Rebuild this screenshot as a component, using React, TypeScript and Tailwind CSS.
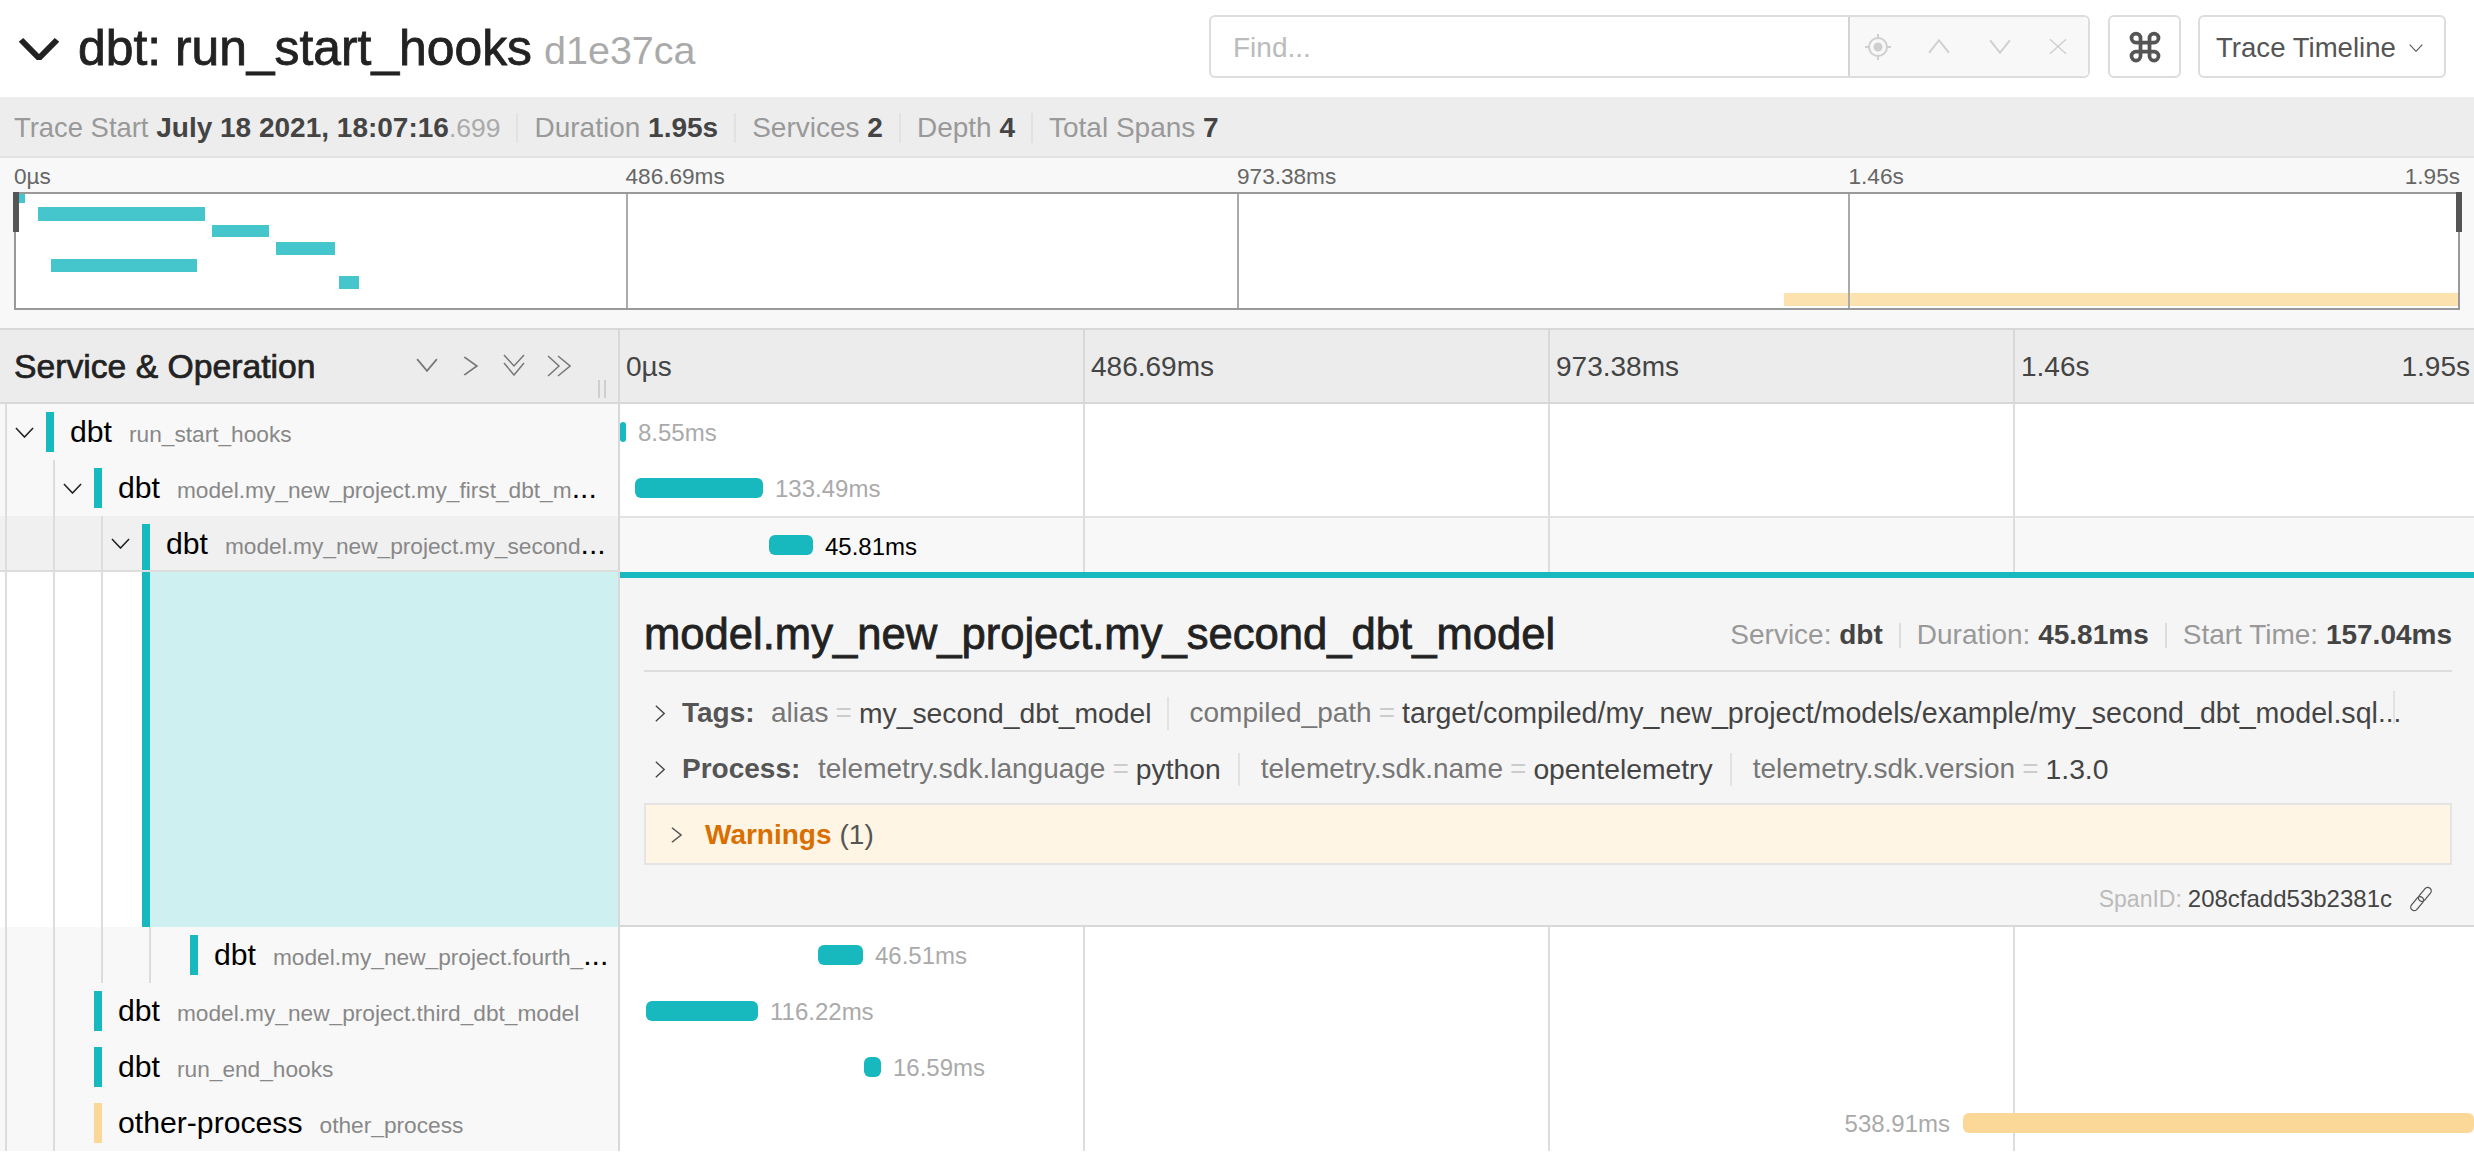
import { Command } from "lucide-react";

const TEAL = "#17b8be";
const ORANGE = "#fbd898";

type Span = {
  service: string;
  op: string;
  cut?: boolean;
  depth: number;
  open?: boolean;
  left: number;
  width: number;
  label: string;
  color: string;
  selected?: boolean;
  labelLeft?: boolean;
};

const topSpans: Span[] = [
  { service: "dbt", op: "run_start_hooks", depth: 0, open: true, left: 0, width: 6, label: "8.55ms", color: TEAL },
  { service: "dbt", op: "model.my_new_project.my_first_dbt_m", cut: true, depth: 1, open: true, left: 15, width: 128, label: "133.49ms", color: TEAL },
  { service: "dbt", op: "model.my_new_project.my_second", cut: true, depth: 2, open: true, left: 149, width: 44, label: "45.81ms", color: TEAL, selected: true },
];

const bottomSpans: Span[] = [
  { service: "dbt", op: "model.my_new_project.fourth_", cut: true, depth: 3, left: 198, width: 45, label: "46.51ms", color: TEAL },
  { service: "dbt", op: "model.my_new_project.third_dbt_model", depth: 1, left: 26, width: 112, label: "116.22ms", color: TEAL },
  { service: "dbt", op: "run_end_hooks", depth: 1, left: 244, width: 17, label: "16.59ms", color: TEAL },
  { service: "other-process", op: "other_process", depth: 1, left: 1343, width: 511, label: "538.91ms", color: ORANGE, labelLeft: true },
];

function Chevron({ dir, className }: { dir: "up" | "down" | "left" | "right"; className: string }) {
  const pts = {
    down: "1,1 10,11 19,1",
    up: "1,11 10,1 19,11",
    right: "1,1 11,10 1,19",
    left: "11,1 1,10 11,19",
  }[dir];
  const box = dir === "down" || dir === "up" ? "0 0 20 12" : "0 0 12 20";
  return (
    <svg viewBox={box} preserveAspectRatio="none" className={className} fill="none" stroke="currentColor" strokeWidth="1.6">
      <polyline points={pts} />
    </svg>
  );
}

function Guides({ depth, chevron }: { depth: number; chevron?: boolean }) {
  const guides = [];
  for (let i = 0; i < depth; i++) {
    guides.push(<div key={i} className="w-[48px] shrink-0 border-l-2 border-[#dddddd]" />);
  }
  return (
    <>
      {guides}
      <div className="w-[41px] shrink-0 self-stretch border-l-2 border-[#dddddd] flex items-center pl-[8px] text-[#222222]">
        {chevron && <Chevron dir="down" className="w-[19px] h-[11px]" />}
      </div>
    </>
  );
}

function GridLines() {
  return (
    <div className="absolute inset-0 flex">
      <div className="w-[465px] border-r-2 border-[#dddddd]" />
      <div className="w-[465px] border-r-2 border-[#dddddd]" />
      <div className="w-[465px] border-r-2 border-[#dddddd]" />
    </div>
  );
}

function SpanRow({ span }: { span: Span }) {
  return (
    <div className={`flex h-[56px] ${span.selected ? "bg-[#f0f0f0]" : ""}`}>
      <div className={`w-[620px] shrink-0 flex pl-[5px] border-r-2 border-[#d8d8d8] ${span.selected ? "bg-[#f0f0f0] border-b-2 border-b-[#dcdcdc]" : "bg-[#f8f8f8]"}`}>
        <Guides depth={span.depth} chevron={span.open} />
        <div
          className={`w-[8px] shrink-0 ${span.selected ? "mt-[8px]" : "my-[8px]"}`}
          style={{ backgroundColor: span.color }}
        />
        <div className="ml-[16px] whitespace-nowrap leading-[56px] text-[22.7px] text-black">
          <span className="text-[30.2px]">{span.service}</span>
          <span className="ml-[17px] text-[#888888]">{span.op}</span>
          {span.cut && <span className="text-[30.2px]">...</span>}
        </div>
      </div>
      <div className={`relative flex-1 ${span.selected ? "bg-[#f8f8f8] border-t-2 border-[#e2e2e2]" : "bg-white"}`}>
        <GridLines />
        <div
          className="absolute top-1/2 -translate-y-1/2 h-[20px] rounded-[6px]"
          style={{ left: span.left, width: span.width, backgroundColor: span.color }}
        />
        <div
          className={`absolute top-[14px] leading-[30px] text-[24px] whitespace-nowrap ${span.selected ? "text-black" : "text-[#aaaaaa]"}`}
          style={span.labelLeft ? { right: 2474 - 620 - span.left + 13 } : { left: span.left + span.width + 12 }}
        >
          {span.label}
        </div>
      </div>
    </div>
  );
}

function KV({ k, v, last, tail, tight, vClass }: { k: string; v: string; last?: boolean; tail?: boolean; tight?: boolean; vClass?: string }) {
  return (
    <div className={`flex items-center h-[33px] ${last ? "" : `border-r-2 border-[#e2e2e2] mr-[21px] ${tight ? "pr-[15px]" : "pr-[17px]"}`}`}>
      <span className="text-[#777777]">{k}</span>
      <span className="text-[#cccccc] mx-[7px]">=</span>
      <span className={`text-[#444444] ${vClass ?? "text-[28.3px]"}`}>{v}</span>
      {tail && (
        <span className="relative text-[#444444]">
          ...
          <span className="absolute left-[15px] -top-[1px] h-[33px] border-l-2 border-[#e2e2e2]" />
        </span>
      )}
    </div>
  );
}

function Minimap() {
  const bars = [
    [5, 0, 6, 11, "#45c6cc"],
    [24, 15, 167, 14, "#45c6cc"],
    [198, 33, 57, 12, "#45c6cc"],
    [262, 50, 59, 13, "#45c6cc"],
    [37, 67, 146, 13, "#45c6cc"],
    [325, 84, 20, 13, "#45c6cc"],
    [1770, 101, 675, 13, "#fbe2ae"],
  ] as const;
  return (
    <div className="h-[170px] bg-[#f8f8f8] px-[14px]">
      <div className="grid grid-cols-4 h-[34px] items-end text-[22.6px] leading-[30px] text-[#666666]">
        <span>0µs</span>
        <span>486.69ms</span>
        <span>973.38ms</span>
        <span className="flex justify-between">
          <span>1.46s</span>
          <span>1.95s</span>
        </span>
      </div>
      <svg width="2446" height="118" className="block overflow-visible">
        <rect width="2446" height="118" fill="white" />
        {bars.map((b, i) => (
          <rect key={i} x={b[0]} y={b[1]} width={b[2]} height={b[3]} fill={b[4]} />
        ))}
        <rect x="612" y="0" width="2" height="118" fill="#aaaaaa" />
        <rect x="1223" y="0" width="2" height="118" fill="#aaaaaa" />
        <rect x="1834" y="0" width="2" height="118" fill="#aaaaaa" />
        <rect x="1" y="1" width="2444" height="116" fill="none" stroke="#999999" strokeWidth="2" />
        <rect x="-1" y="0" width="6" height="40" fill="#555555" />
        <rect x="2442" y="0" width="6" height="40" fill="#555555" />
      </svg>
    </div>
  );
}

export default function App() {
  return (
    <div className="w-[2474px] h-[1152px] overflow-hidden bg-white font-['Liberation_Sans',Arial,sans-serif]">
      {/* Шапка */}
      <div className="h-[97px] flex items-center pl-[19px] pr-[28px]">
        <Chevron dir="down" className="w-[40px] h-[22px] text-[#222222] [&>polyline]:[stroke-width:3]" />
        <h1 className="ml-[19px] text-[49.8px] leading-none text-[#222222] [-webkit-text-stroke:0.8px_#222222]">dbt: run_start_hooks</h1>
        <span className="ml-[12px] text-[39.5px] leading-none text-[#aaaaaa] mt-[4px]">d1e37ca</span>
        <div className="ml-auto flex items-center mb-[4px]">
          <div className="flex h-[63px] w-[881px] rounded-[6px] border-2 border-[#dddddd]">
            <div className="w-[639px] flex items-center pl-[22px] pt-[2px] text-[28px] text-[#bbbbbb] border-r-2 border-[#d4d4d4]">Find...</div>
            <div className="flex-1 flex items-center bg-[#f8f8f8] text-[#cfcfcf] rounded-r-[6px]">
              <svg viewBox="0 0 26 26" className="ml-[15px] w-[26px] h-[26px]" fill="none" stroke="currentColor" strokeWidth="2">
                <circle cx="13" cy="13" r="9" />
                <circle cx="13" cy="13" r="4.5" fill="currentColor" stroke="none" />
                <path d="M13 0v4M13 22v4M0 13h4M22 13h4" />
              </svg>
              <Chevron dir="up" className="ml-[37px] w-[22px] h-[15px]" />
              <Chevron dir="down" className="ml-[39px] w-[22px] h-[15px]" />
              <svg viewBox="0 0 20 18" className="ml-[38px] w-[18px] h-[17px]" fill="none" stroke="currentColor" strokeWidth="1.6">
                <path d="M1 1L19 17M19 1L1 17" />
              </svg>
            </div>
          </div>
          <div className="ml-[18px] w-[73px] h-[63px] rounded-[6px] border-2 border-[#dddddd] flex items-center justify-center text-[#555555]">
            <Command size={36} strokeWidth={2.5} />
          </div>
          <div className="ml-[17px] w-[248px] h-[63px] rounded-[6px] border-2 border-[#dddddd] flex items-center pl-[16px] pt-[2px] text-[27.6px] text-[#555555]">
            Trace Timeline
            <Chevron dir="down" className="ml-[13px] w-[14px] h-[8px]" />
          </div>
        </div>
      </div>

      {/* Статистика */}
      <div className="h-[61px] bg-[#ededed] border-b-2 border-[#e2e2e2] flex items-center pl-[14px] pt-[2px] text-[28px] text-[#999999]">
        <span>
          <span className="text-[27.4px]">Trace Start</span> <b className="text-[#444444]">July 18 2021, 18:07:16</b>
          <span className="text-[#aaaaaa] text-[26.5px]">.699</span>
        </span>
        <span className="h-[30px] border-l-2 border-[#e2e2e2] mx-[16px]" />
        <span>Duration <b className="text-[#444444]">1.95s</b></span>
        <span className="h-[30px] border-l-2 border-[#e2e2e2] mx-[16px]" />
        <span>Services <b className="text-[#444444]">2</b></span>
        <span className="h-[30px] border-l-2 border-[#e2e2e2] mx-[16px]" />
        <span>Depth <b className="text-[#444444]">4</b></span>
        <span className="h-[30px] border-l-2 border-[#e2e2e2] mx-[16px]" />
        <span>Total Spans <b className="text-[#444444]">7</b></span>
      </div>

      <Minimap />

      {/* Заголовок таймлайна */}
      <div className="flex h-[76px] bg-[#ececec] border-y-2 border-[#d8d8d8]">
        <div className="relative w-[620px] shrink-0 flex items-center pl-[14px] border-r-2 border-[#d8d8d8]">
          <span className="text-[33.7px] text-[#222222] [-webkit-text-stroke:0.7px_#222222] flex-1">Service &amp; Operation</span>
          <div className="absolute left-[416px] top-[28px] text-[#777777]">
            <Chevron dir="down" className="w-[22px] h-[14px]" />
          </div>
          <div className="absolute left-[463px] top-[26px] text-[#777777]">
            <Chevron dir="right" className="w-[15px] h-[20px]" />
          </div>
          <div className="absolute left-[503px] top-[24px] text-[#777777]">
            <svg viewBox="0 0 22 22" className="w-[22px] h-[22px]" fill="none" stroke="currentColor" strokeWidth="1.5">
              <path d="M1 1L11 12L21 1M1 9L11 21L21 9" />
            </svg>
          </div>
          <div className="absolute left-[547px] top-[25px] text-[#777777]">
            <svg viewBox="0 0 24 22" className="w-[24px] h-[22px]" fill="none" stroke="currentColor" strokeWidth="1.5">
              <path d="M1 1L12 11L1 21M11 1L23 11L11 21" />
            </svg>
          </div>
          <div className="absolute left-[598px] top-[50px] w-[8px] h-[18px] border-x-2 border-[#cfcfcf]" />
        </div>
        <div className="flex-1 flex items-center text-[28px] text-[#444444]">
          <div className="w-[465px] pl-[6px] pt-[2px] border-r-2 border-[#d8d8d8] self-stretch flex items-center">0µs</div>
          <div className="w-[465px] pl-[6px] pt-[2px] border-r-2 border-[#d8d8d8] self-stretch flex items-center">486.69ms</div>
          <div className="w-[465px] pl-[6px] pt-[2px] border-r-2 border-[#d8d8d8] self-stretch flex items-center">973.38ms</div>
          <div className="flex-1 pl-[6px] pr-[4px] pt-[2px] flex justify-between">
            <span>1.46s</span>
            <span>1.95s</span>
          </div>
        </div>
      </div>

      {topSpans.map((s) => (
        <SpanRow key={s.op} span={s} />
      ))}

      {/* Детали спана */}
      <div className="flex h-[355px]">
        <div className="w-[620px] shrink-0 flex pl-[5px] bg-white">
          <Guides depth={2} />
          <div className="w-[8px] bg-[#17b8be]" />
          <div className="flex-1 bg-[#cff0f1] border-r-2 border-[#d8d8d8]" />
        </div>
        <div className="flex-1 min-w-0 bg-[#f5f5f5] border-t-[6px] border-t-[#17b8be] border-b-2 border-b-[#d8d8d8] pl-[24px] pr-[22px]">
          <div className="flex items-center h-[94px] pt-[22px] border-b-2 border-[#dddddd]">
            <h2 className="text-[43.6px] leading-none text-[#222222] [-webkit-text-stroke:0.8px_#222222] whitespace-nowrap">model.my_new_project.my_second_dbt_model</h2>
            <div className="ml-auto flex items-center text-[28px] text-[#999999] whitespace-nowrap">
              <span>Service: <b className="text-[#444444]">dbt</b></span>
              <span className="h-[25px] border-l-2 border-[#dddddd] mx-[16px]" />
              <span>Duration: <b className="text-[#444444]">45.81ms</b></span>
              <span className="h-[25px] border-l-2 border-[#dddddd] mx-[16px]" />
              <span>Start Time: <b className="text-[#444444]">157.04ms</b></span>
            </div>
          </div>
          <div className="flex items-center h-[56px] mt-[13px] text-[28px] whitespace-nowrap overflow-hidden">
            <Chevron dir="right" className="ml-[11px] w-[10px] h-[17px] text-[#444444]" />
            <b className="ml-[17px] text-[#555555] w-[89px]">Tags:</b>
            <KV k="alias" v="my_second_dbt_model" tight />
            <KV k="compiled_path" v="target/compiled/my_new_project/models/example/my_second_dbt_model.sql" vClass="text-[28.6px]" last tail />
          </div>
          <div className="flex items-center h-[56px] text-[28px] whitespace-nowrap overflow-hidden">
            <Chevron dir="right" className="ml-[11px] w-[10px] h-[17px] text-[#444444]" />
            <b className="ml-[17px] text-[#555555] w-[136px]">Process:</b>
            <KV k="telemetry.sdk.language" v="python" />
            <KV k="telemetry.sdk.name" v="opentelemetry" />
            <KV k="telemetry.sdk.version" v="1.3.0" last />
          </div>
          <div className="mt-[6px] h-[62px] bg-[#fff5e4] border-2 border-[#e4e4e4] flex items-center pl-[25px] pt-[2px] text-[28px] text-[#555555]">
            <Chevron dir="right" className="w-[11px] h-[16px]" />
            <b className="ml-[23px] text-[#d96f00]">Warnings</b>
            <span className="ml-[8px]">(1)</span>
          </div>
          <div className="flex items-center justify-end h-[60px] pt-[8px] pr-[18px] text-[24px]">
            <span className="text-[#bbbbbb] text-[23px]">SpanID:</span>
            <span className="ml-[6px] text-[#444444]">208cfadd53b2381c</span>
            <svg viewBox="0 0 26 26" className="ml-[16px] w-[26px] h-[26px] text-[#555555]" fill="none" stroke="currentColor" strokeWidth="1.3">
              <rect x="9.5" y="-1" width="7" height="16" rx="3.5" transform="rotate(40 13 13)" />
              <rect x="9.5" y="11" width="7" height="16" rx="3.5" transform="rotate(40 13 13)" />
            </svg>
          </div>
        </div>
      </div>

      {bottomSpans.map((s) => (
        <SpanRow key={s.op} span={s} />
      ))}
    </div>
  );
}
